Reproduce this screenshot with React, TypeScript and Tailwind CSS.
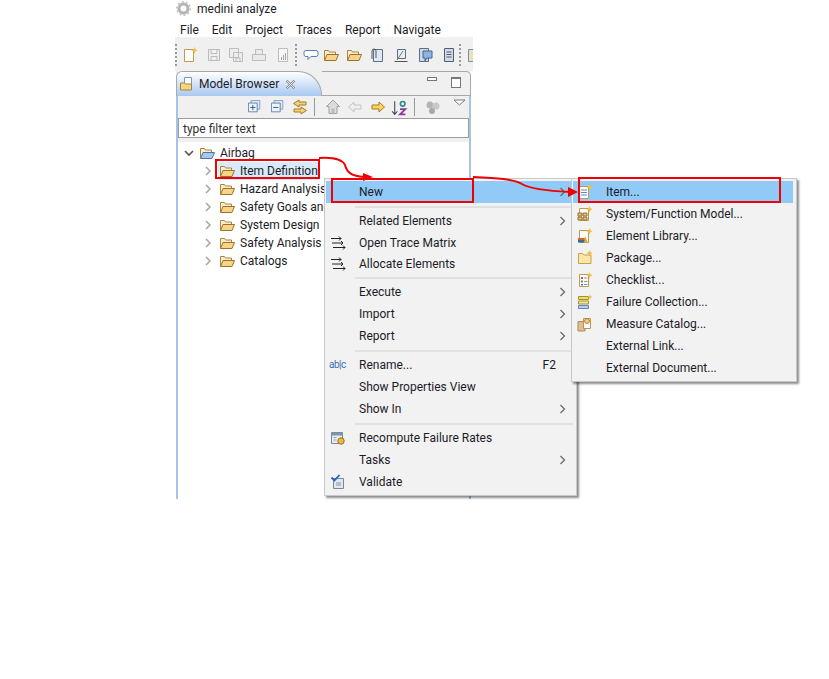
import type { ReactNode } from "react";

type MenuRow = { label?: string; icon?: ReactNode; arrow?: boolean; accel?: string; active?: boolean; sep?: boolean; tight?: boolean };

function Ico({ size = 16, children }: { size?: number; children: ReactNode }) {
  return (
    <svg width={size} height={size} viewBox="0 0 16 16" className="shrink-0">
      {children}
    </svg>
  );
}

function FolderOpen({ blue = false }: { blue?: boolean }) {
  return (
    <Ico>
      <path d="M1.500 13V3.500h4l1 1.500h6v3" fill="#fbeecb" stroke="#a9853f" />
      <path d="M1.500 13.500l2.500-6h11.500l-2.500 6z" fill={blue ? "#a9c8ee" : "#f6d48a"} stroke={blue ? "#4f76ab" : "#a0702a"} />
    </Ico>
  );
}

function Chevron({ open = false }: { open?: boolean }) {
  return (
    <svg width="10" height="10" viewBox="0 0 10 10" className="shrink-0">
      <path d={open ? "M1 3l4 4 4-4" : "M3 1l4 4-4 4"} fill="none" stroke={open ? "#555" : "#a8a8a8"} strokeWidth="1.600" />
    </svg>
  );
}

function TraceIcon() {
  return (
    <Ico>
      <path d="M1 3.500h10M2 8h11M3 12.500h12M9 1.500l2 2-2 2M11 6l2 2-2 2M13 10.500l2 2-2 2" fill="none" stroke="#222" />
    </Ico>
  );
}

function DocStar({ children }: { children?: ReactNode }) {
  return (
    <Ico>
      <path d="M2.500 2.500h9v12h-9z" fill="#fff" stroke="#c09a55" />
      <path d="M12.500 0l1 2.200 2.200 1-2.200 1-1 2.200-1-2.200-2.200-1 2.200-1z" fill="#f0c040" />
      {children}
    </Ico>
  );
}

const mainMenu: MenuRow[] = [
  { label: "New", arrow: true, active: true },
  { sep: true },
  { label: "Related Elements", arrow: true },
  { label: "Open Trace Matrix", icon: <TraceIcon />, tight: true },
  { label: "Allocate Elements", icon: <TraceIcon />, tight: true },
  { sep: true },
  { label: "Execute", arrow: true },
  { label: "Import", arrow: true },
  { label: "Report", arrow: true },
  { sep: true },
  {
    label: "Rename...",
    accel: "F2",
    icon: (
      <span className="-ml-[1px] text-[10px] leading-none tracking-[-0.5px] text-[#3f6fb0]">ab|c</span>
    ),
  },
  { label: "Show Properties View" },
  { label: "Show In", arrow: true },
  { sep: true },
  {
    label: "Recompute Failure Rates",
    icon: (
      <Ico>
        <path d="M1.500 2.500h11v11h-11z" fill="#e8ecf2" stroke="#7a8794" />
        <path d="M1.500 2.500h11v3h-11z" fill="#7f93ad" />
        <path d="M3.500 7.500h3M3.500 10h3" stroke="#9aa6b2" />
        <circle cx="11" cy="11" r="3.200" fill="#efb93f" stroke="#96702a" />
      </Ico>
    ),
  },
  { label: "Tasks", arrow: true },
  {
    label: "Validate",
    icon: (
      <Ico>
        <path d="M3.500 4.500h10v10h-10z" fill="#dfe8f0" stroke="#7a8794" />
        <path d="M6 9h5M6 11h5" stroke="#8a97a5" />
        <path d="M1.500 3.500l3 3 5-5.500" fill="none" stroke="#2a62c0" strokeWidth="1.800" />
      </Ico>
    ),
  },
];

const subMenu: MenuRow[] = [
  {
    label: "Item...",
    active: true,
    icon: (
      <DocStar>
        <path d="M4 6h6M4 8.500h6M4 11h6" stroke="#5f86b8" />
      </DocStar>
    ),
  },
  {
    label: "System/Function Model...",
    icon: (
      <DocStar>
        <path d="M1 7h4v3H1zM6 7h4v3H6zM1 11h4v3H1zM6 11h4v3H6z" fill="#e2c26e" stroke="#94733a" />
      </DocStar>
    ),
  },
  {
    label: "Element Library...",
    icon: (
      <DocStar>
        <path d="M1 10h7v2H1z" fill="#d9622b" />
        <path d="M1 12h7v2.500H1z" fill="#2f6e9e" />
        <path d="M8 8l3 6.500H7z" fill="#e6a935" />
      </DocStar>
    ),
  },
  {
    label: "Package...",
    icon: (
      <Ico>
        <path d="M1.500 13.500v-10h4l1.500 1.500h7v8.500z" fill="#fbe6a8" stroke="#c3a052" />
        <path d="M12.500 0l1 2.200 2.200 1-2.200 1-1 2.200-1-2.200-2.200-1 2.200-1z" fill="#f0c040" />
      </Ico>
    ),
  },
  {
    label: "Checklist...",
    icon: (
      <DocStar>
        <path d="M4 5h2v2H4z" fill="#d24d4d" />
        <path d="M4 8.500h2v2H4z" fill="#4aa04a" />
        <path d="M4 12h2v1.500H4z" fill="#4a78c0" />
        <path d="M7 6h3.500M7 9.500h3.500M7 12.500h3.500" stroke="#8a97a5" />
      </DocStar>
    ),
  },
  {
    label: "Failure Collection...",
    icon: (
      <Ico>
        <path d="M1.500 2.500h10v3h-10z" fill="#f2dc5a" stroke="#a39232" />
        <path d="M1.500 7h10v3h-10z" fill="#e9e7a0" stroke="#a39232" />
        <path d="M1.500 11.500h10v3h-10z" fill="#b6d0ec" stroke="#5f86b8" />
        <path d="M13 0.500l.7 1.800 1.800.7-1.800.7-.7 1.800-.7-1.800-1.800-.7 1.800-.7z" fill="#f0c040" />
      </Ico>
    ),
  },
  {
    label: "Measure Catalog...",
    icon: (
      <Ico>
        <path d="M1 5.500h7v9.500H1z" fill="#e0bd92" stroke="#b08a5c" />
        <path d="M6.500 2.500h7v10h-7z" fill="#fff" stroke="#b8935a" />
        <circle cx="10" cy="5" r="2.400" fill="#f6d466" stroke="#a87a2a" />
      </Ico>
    ),
  },
  { label: "External Link..." },
  { label: "External Document..." },
];

function PopupMenu({ rows, className }: { rows: MenuRow[]; className: string }) {
  return (
    <div className={`absolute border border-[#c8c8c8] bg-[#f2f2f2] py-[2px] shadow-[2px_2px_2px_rgba(0,0,0,0.45)] ${className}`}>
      {rows.map((row, i) =>
        row.sep ? (
          <div key={i} className="mr-[3px] ml-[30px] flex h-[7px] items-center">
            <div className="h-[2px] w-full bg-[#e1e1e1]" />
          </div>
        ) : (
          <div
            key={i}
            className={`mr-[3px] ml-[1px] flex items-center ${row.tight ? "h-[21px]" : "h-[22px]"} ${row.active ? "bg-[#91c9f7]" : ""}`}
          >
            <span className="flex w-[29px] shrink-0 items-center justify-start pl-[4px]">{row.icon}</span>
            <span className="ml-[4px] flex-1 whitespace-nowrap">{row.label}</span>
            {row.accel && <span className="mr-[17px]">{row.accel}</span>}
            {row.arrow && (
              <svg width="7" height="10" viewBox="0 0 7 10" className="mr-[7px] shrink-0">
                <path d="M1.500 1l4 4-4 4" fill="none" stroke="#666" strokeWidth="1.200" />
              </svg>
            )}
          </div>
        ),
      )}
    </div>
  );
}

function Grip({ className = "" }: { className?: string }) {
  return <div className={`h-[22px] w-[2px] shrink-0 border-l-2 border-dotted border-[#9a9a9a] ${className}`} />;
}

function TreeRow({ label, selected = false }: { label: string; selected?: boolean }) {
  return (
    <div className="flex h-[18px] items-center pl-[25px]">
      <Chevron />
      <span className={`ml-[5px] flex h-[18px] items-center gap-[5px] px-[1px] ${selected ? "bg-[#d9ebfa]" : ""}`}>
        <FolderOpen />
        <span className="whitespace-nowrap">{label}</span>
      </span>
    </div>
  );
}

export default function App() {
  return (
    <div className="relative h-[679px] w-[829px] overflow-hidden bg-white font-['Roboto',sans-serif] text-[12px] text-[#1c1c28]">
      <div className="ml-[175px] flex h-[499px] w-[298px] flex-col">
        {/* window title */}
        <div className="flex h-[17px] items-center gap-[6px] pl-[1px]">
          <svg width="15" height="15" viewBox="0 0 15 15">
            <circle cx="7.500" cy="7.500" r="4.500" fill="none" stroke="#b4b4b4" strokeWidth="3" />
            <circle cx="7.500" cy="7.500" r="6.500" fill="none" stroke="#c8c8c8" strokeWidth="2" strokeDasharray="2 2" />
          </svg>
          <span className="text-[12px]">medini analyze</span>
        </div>

        {/* menu bar */}
        <div className="flex h-[20px] items-center gap-[13px] pt-[5px] pl-[5px]">
          <span>File</span>
          <span>Edit</span>
          <span>Project</span>
          <span>Traces</span>
          <span>Report</span>
          <span>Navigate</span>
        </div>

        {/* main toolbar */}
        <div className="flex h-[34px] items-center overflow-hidden bg-[#f0f0f0] pt-[2px]">
          <Grip />
          <span className="ml-[5px]"><DocStar /></span>
          <span className="ml-[8px]"><Ico><path d="M2.500 2.500h11v11h-11zM5 2.500v4h6v-4M5 13.500v-4h6v4" fill="#eee" stroke="#bcbcbc" /></Ico></span>
          <span className="ml-[6px]"><Ico><path d="M1.500 1.500h9v9h-9zM5.500 5.500h9v9h-9zM8 14v-3h4v3" fill="#eee" stroke="#bcbcbc" /></Ico></span>
          <span className="ml-[7px]"><Ico><path d="M4.500 2.500h7v5h-7zM1.500 7.500h13v6h-13z" fill="#e9e9e9" stroke="#bcbcbc" /></Ico></span>
          <span className="ml-[8px]"><Ico><path d="M3.500 1.500h9v13h-9z" fill="#f6f6f6" stroke="#bcbcbc" /><path d="M6 10h1v3H6zM8 8h1v5H8zM10 6h1v7h-1z" fill="#9aa6b2" /></Ico></span>
          <Grip className="ml-[4px]" />
          <span className="ml-[6px]"><Ico><path d="M3 3.500h10a2 2 0 0 1 2 2v2a2 2 0 0 1-2 2H8l-3 3v-3H3a2 2 0 0 1-2-2v-2a2 2 0 0 1 2-2z" fill="#fff" stroke="#5a7fb0" /></Ico></span>
          <span className="ml-[4px]"><FolderOpen /></span>
          <span className="ml-[7px]"><FolderOpen /></span>
          <span className="ml-[7px]"><Ico><path d="M4.500 2.500h9v12h-9z" fill="#dfe8f3" stroke="#5c6f88" /><path d="M3 12V4a2 2 0 0 1 4 0v7" fill="none" stroke="#555" /></Ico></span>
          <span className="ml-[8px]"><Ico><path d="M4.500 2.500h8v9h-8z" fill="#e9edf2" stroke="#5c6f88" /><path d="M1.500 14.500h13" stroke="#555" /><path d="M4 13l6-9" stroke="#777" /></Ico></span>
          <span className="ml-[8px]"><Ico><path d="M2.500 1.500h9v13h-9z" fill="#d3d9e2" stroke="#5c6f88" /><path d="M6 4h9v7h-5l-2 3v-3H6z" fill="#8fb4e2" stroke="#44638f" /></Ico></span>
          <span className="ml-[8px]"><Ico><path d="M3.500 1.500h9v13h-9z" fill="#d3dae3" stroke="#4f5e72" /><path d="M5.500 5h5M5.500 7.500h5M5.500 10h5" stroke="#4f5e72" /></Ico></span>
          <Grip className="ml-[2px]" />
          <span className="ml-[6px]"><Ico><path d="M1.500 2.500h13v12h-13z" fill="#e9dfc2" stroke="#7f8da0" /></Ico></span>
        </div>

        {/* view */}
        <div className="flex min-h-0 flex-1 flex-col pr-[2px] pl-[1px]">
          <div className="flex h-[25px] bg-[#f0f0f0]">
            <div className="flex w-[146px] shrink-0 items-center gap-[4px] rounded-tl-[6px] rounded-tr-[24px] border border-b-0 border-[#a8a8a8] bg-gradient-to-b from-white to-[#a9c8f0] pl-[2px]">
              <Ico><path d="M5.500 1.500h7v10h-7z" fill="#fff" stroke="#7a99c4" /><path d="M1.500 14v-7h4l1 1h6v6z" fill="#f4d584" stroke="#a9853f" /></Ico>
              <span className="whitespace-nowrap">Model Browser</span>
              <svg width="11" height="11" viewBox="0 0 11 11" className="ml-[2px] shrink-0">
                <path d="M1.500 1.500l8 8M9.500 1.500l-8 8" stroke="#888" strokeWidth="2.200" />
                <path d="M1.500 1.500l8 8M9.500 1.500l-8 8" stroke="#fff" strokeWidth="0.800" />
              </svg>
            </div>
            <div className="flex flex-1 items-start justify-end gap-[14px] rounded-tr-[5px] border-t border-r border-b border-[#a8a8a8] pt-[5px] pr-[9px]">
              <div className="h-[4px] w-[10px] border border-[#777] bg-white" />
              <div className="h-[11px] w-[10px] border border-t-2 border-[#777] bg-white" />
            </div>
          </div>
          <div className="flex min-h-0 flex-1 flex-col border-x-2 border-[#a9c2e8]">
            <div className="relative flex h-[22px] items-center bg-[#f0f0f0] pl-[70px]">
              <Ico size={14}><path d="M3.500 0.500h10v10h-10z" fill="#dce6f2" stroke="#7f9bc0" /><path d="M0.500 3.500h10v10h-10z" fill="#eef3f9" stroke="#5a7ca8" /><path d="M2.500 8.500h6M5.500 5.500v6" stroke="#2b4f80" /></Ico>
              <span className="ml-[9px]"><Ico size={14}><path d="M3.500 0.500h10v10h-10z" fill="#dce6f2" stroke="#7f9bc0" /><path d="M0.500 3.500h10v10h-10z" fill="#eef3f9" stroke="#5a7ca8" /><path d="M2.500 8.500h6" stroke="#2b4f80" /></Ico></span>
              <span className="ml-[7px]"><Ico><path d="M7 1L1.500 4.500 7 8V6h7V3H7zM9 8l5.500 3.500L9 15v-2H2v-3h7z" fill="#f3d27a" stroke="#a67c20" /></Ico></span>
              <div className="ml-[6px] h-[18px] w-px bg-[#9a9a9a]" />
              <span className="ml-[10px]"><Ico><path d="M8 1L1.500 7.500H4v7h8v-7h2.500z" fill="#dcdcdc" stroke="#a0a0a0" /><path d="M6.500 9.500h3v5h-3z" fill="#bbb" /></Ico></span>
              <span className="ml-[6px]"><Ico><path d="M7 3L1.500 8 7 13v-3h7V6H7z" fill="#eee" stroke="#c4c4c4" /></Ico></span>
              <span className="ml-[7px]"><Ico><path d="M9 3l5.500 5L9 13v-3H2V6h7z" fill="#f6d560" stroke="#a67c20" /></Ico></span>
              <span className="ml-[5px]"><Ico size={17}><path d="M3.500 2v12M1 11.500l2.500 3 2.500-3" fill="none" stroke="#445" /><circle cx="11" cy="4.500" r="2.200" fill="none" stroke="#2a8a8a" strokeWidth="1.500" /><path d="M8.500 9.500h5l-5 5h5" fill="none" stroke="#8a3a9a" strokeWidth="1.700" /></Ico></span>
              <div className="ml-[6px] h-[18px] w-px bg-[#9a9a9a]" />
              <span className="ml-[10px]"><Ico><circle cx="5" cy="6" r="3.500" fill="#b5b5b5" /><circle cx="11" cy="7" r="3.500" fill="#c8c8c8" /><circle cx="7" cy="12" r="3" fill="#a8a8a8" /></Ico></span>
              <svg width="13" height="7" viewBox="0 0 13 7" className="absolute top-[3px] right-[3px]">
                <path d="M1 1h11L6.500 6z" fill="#fff" stroke="#777" />
              </svg>
            </div>
            <div className="flex h-[20px] shrink-0 items-center border border-[#9c9c9c] bg-white pt-[1px] pl-[4px] text-[#333]">type filter text</div>
            <div className="h-[4px] bg-[#f0f0f0]" />
            <div className="min-h-0 flex-1 bg-white pt-[2px]">
              <div className="flex h-[18px] items-center pl-[6px]">
                <Chevron open />
                <span className="ml-[5px] flex items-center gap-[5px]">
                  <FolderOpen blue />
                  Airbag
                </span>
              </div>
              <TreeRow label="Item Definition" selected />
              <TreeRow label="Hazard Analysis" />
              <TreeRow label="Safety Goals and" />
              <TreeRow label="System Design" />
              <TreeRow label="Safety Analysis" />
              <TreeRow label="Catalogs" />
            </div>
          </div>
        </div>
      </div>

      <PopupMenu rows={mainMenu} className="top-[178px] left-[324px] w-[253px]" />
      <PopupMenu rows={subMenu} className="top-[178px] left-[571px] w-[226px]" />

      {/* annotation boxes and arrows from the screenshot */}
      <div className="absolute top-[159px] left-[215px] h-[20px] w-[105px] border-2 border-[#f00000]" />
      <div className="absolute top-[178px] left-[331px] h-[25px] w-[143px] border-2 border-[#f00000]" />
      <div className="absolute top-[177px] left-[578px] h-[26px] w-[203px] border-2 border-[#f00000]" />
      <svg width="829" height="679" viewBox="0 0 829 679" className="pointer-events-none absolute top-0 left-0">
        <path d="M319 158C333 157 342 159 345 165C347 173 352 176 364 177" fill="none" stroke="#f00000" strokeWidth="2" />
        <path d="M363 173l10 4-10 4z" fill="#f00000" />
        <path d="M473 177C495 178 515 179 522 184C530 189 550 191 570 192" fill="none" stroke="#f00000" strokeWidth="2" />
        <path d="M568 187l10 5-10 5z" fill="#f00000" />
      </svg>
    </div>
  );
}
